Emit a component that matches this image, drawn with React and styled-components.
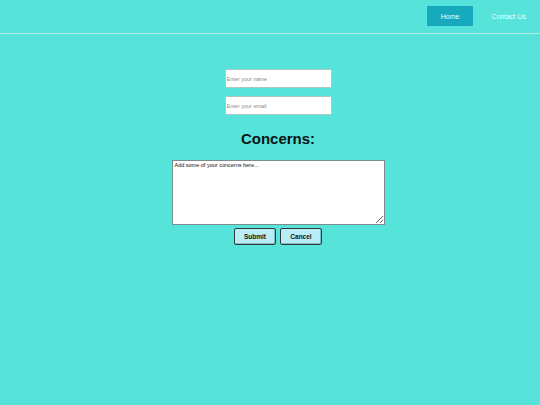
import React from 'react';
import styled, { createGlobalStyle } from 'styled-components';

const GlobalStyle = createGlobalStyle`
  html, body {
    margin: 0;
    padding: 0;
    background: #56e3da;
    font-family: "Liberation Sans", Arial, sans-serif;
  }
  * {
    box-sizing: border-box;
  }
`;

const Page = styled.div`
  min-height: 405px;
  background: #56e3da;
`;

const Header = styled.header`
  display: flex;
  justify-content: flex-end;
  align-items: flex-start;
  gap: 4px;
  height: 34px;
  padding-top: 6px;
  border-bottom: 1px solid #b4ebe6;
`;

const NavItem = styled.a`
  display: flex;
  align-items: center;
  justify-content: center;
  height: 20px;
  padding: 0 14px;
  font-size: 7px;
  color: #f2fbfb;
  text-decoration: none;
  border-radius: 1px;
  background: ${(p) => (p.$active ? '#17a9bd' : 'transparent')};
`;

const Form = styled.form`
  display: flex;
  flex-direction: column;
  align-items: center;
  padding-left: 16px;
  padding-top: 35px;
`;

const Input = styled.input`
  width: 107px;
  height: 19px;
  margin: 0 0 8px;
  padding: 0 1px;
  border: 1px solid #a9c9c6;
  background: #fff;
  font-family: inherit;
  font-size: 5.5px;
  outline: none;

  &::placeholder {
    color: #8a8a8a;
  }
`;

const Heading = styled.h1`
  margin: 7px 0 13px;
  font-size: 15px;
  font-weight: bold;
  color: #0b1414;
  line-height: 17px;
`;

const TextArea = styled.textarea`
  width: 213px;
  height: 65px;
  margin: 0;
  padding: 1px 2px;
  border: 1px solid #7a8c8b;
  background: #fff;
  font-family: inherit;
  font-size: 5.5px;
  resize: both;
  outline: none;

  &::placeholder {
    color: #111;
  }
`;

const Buttons = styled.div`
  display: flex;
  gap: 4px;
  margin-top: 3px;
`;

const Button = styled.button`
  width: 42px;
  height: 17px;
  padding: 0;
  border: 1px solid #2f3b3b;
  border-radius: 2px;
  background: #b9edf6;
  font-family: inherit;
  font-size: 6.5px;
  font-weight: bold;
  color: #111;
  box-shadow: inset -1px -1px 0 #7fb9c2;
`;

export default function App() {
  return (
    <Page>
      <GlobalStyle />
      <Header>
        <NavItem $active href="#">Home</NavItem>
        <NavItem href="#">Contact Us</NavItem>
      </Header>
      <Form onSubmit={(e) => e.preventDefault()}>
        <Input type="text" placeholder="Enter your name" />
        <Input type="email" placeholder="Enter your email" />
        <Heading>Concerns:</Heading>
        <TextArea placeholder="Add some of your concerns here..." />
        <Buttons>
          <Button type="submit">Submit</Button>
          <Button type="button">Cancel</Button>
        </Buttons>
      </Form>
    </Page>
  );
}
